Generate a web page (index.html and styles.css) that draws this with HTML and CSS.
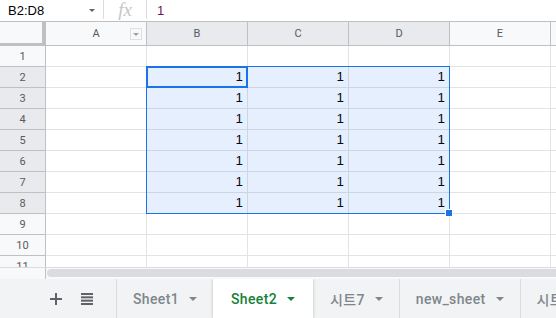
FILE: index.html
```html
<!DOCTYPE html>
<html>
<head>
<meta charset="utf-8">
<link rel="stylesheet" href="styles.css">
</head>
<body>
<div class="formula-bar">
  <div class="name-box"><span>B2:D8</span><span class="tri small"></span></div>
  <div class="vsep"></div>
  <div class="fx">fx</div>
  <div class="vsep"></div>
  <div class="formula">1</div>
</div>
<div class="grid-wrap">
  <div class="grid">
    <div class="corner"></div>
    <div class="ch">A<span class="filter"><span class="tri tiny"></span></span></div>
    <div class="ch sel">B</div>
    <div class="ch sel">C</div>
    <div class="ch sel">D</div>
    <div class="ch">E</div>
    <div class="ch"></div>

    <div class="rh">1</div><div class="c"></div><div class="c"></div><div class="c"></div><div class="c"></div><div class="c"></div><div class="c"></div>
    <div class="rh sel">2</div><div class="c"></div><div class="c n">1</div><div class="c n">1</div><div class="c n">1</div><div class="c"></div><div class="c"></div>
    <div class="rh sel">3</div><div class="c"></div><div class="c n">1</div><div class="c n">1</div><div class="c n">1</div><div class="c"></div><div class="c"></div>
    <div class="rh sel">4</div><div class="c"></div><div class="c n">1</div><div class="c n">1</div><div class="c n">1</div><div class="c"></div><div class="c"></div>
    <div class="rh sel">5</div><div class="c"></div><div class="c n">1</div><div class="c n">1</div><div class="c n">1</div><div class="c"></div><div class="c"></div>
    <div class="rh sel">6</div><div class="c"></div><div class="c n">1</div><div class="c n">1</div><div class="c n">1</div><div class="c"></div><div class="c"></div>
    <div class="rh sel">7</div><div class="c"></div><div class="c n">1</div><div class="c n">1</div><div class="c n">1</div><div class="c"></div><div class="c"></div>
    <div class="rh sel">8</div><div class="c"></div><div class="c n">1</div><div class="c n">1</div><div class="c n">1</div><div class="c"></div><div class="c"></div>
    <div class="rh">9</div><div class="c"></div><div class="c"></div><div class="c"></div><div class="c"></div><div class="c"></div><div class="c"></div>
    <div class="rh">10</div><div class="c"></div><div class="c"></div><div class="c"></div><div class="c"></div><div class="c"></div><div class="c"></div>
    <div class="rh">11</div><div class="c"></div><div class="c"></div><div class="c"></div><div class="c"></div><div class="c"></div><div class="c"></div>
  </div>
  <div class="selection"></div>
  <div class="active-cell"></div>
  <div class="fill-handle"></div>
</div>
<div class="hscroll">
  <div class="hscroll-gutter"></div>
  <div class="hscroll-track"><div class="thumb"></div></div>
</div>
<div class="tabbar">
  <div class="tab-tools">
    <svg class="plus" width="14" height="14" viewBox="0 0 14 14"><path d="M7 1v12M1 7h12" stroke="#5f6368" stroke-width="2" fill="none"/></svg>
    <svg class="list" width="12" height="12" viewBox="0 0 12 12" fill="#5f6368"><rect x="0" y="0" width="12" height="2"/><rect x="0" y="3.33" width="12" height="2"/><rect x="0" y="6.67" width="12" height="2"/><rect x="0" y="10" width="12" height="2"/></svg>
  </div>
  <div class="tab"><span>Sheet1</span><span class="tri"></span></div>
  <div class="tab active"><span>Sheet2</span><span class="tri"></span></div>
  <div class="tab"><span>시트7</span><span class="tri"></span></div>
  <div class="tab"><span>new_sheet</span><span class="tri"></span></div>
  <div class="tab"><span>시트8</span><span class="tri"></span></div>
</div>
</body>
</html>
```
FILE: styles.css
```css
* { box-sizing: border-box; }
html, body { margin: 0; padding: 0; }
body {
  width: 556px;
  height: 318px;
  overflow: hidden;
  background: #fff;
  font-family: Roboto, "Noto Sans CJK KR", Arial, sans-serif;
  color: #000;
}

.tri {
  display: inline-block;
  width: 0; height: 0;
  border-left: 4px solid transparent;
  border-right: 4px solid transparent;
  border-top: 4px solid #80868b;
}
.tri.small {
  border-left-width: 3px;
  border-right-width: 3px;
  border-top: 3px solid #5f6368;
}
.tri.tiny {
  border-left-width: 3px;
  border-right-width: 3px;
  border-top: 3px solid #9aa0a6;
}

/* formula bar */
.formula-bar {
  display: flex;
  align-items: center;
  height: 22px;
  border-bottom: 1px solid #c0c0c0;
}
.name-box {
  width: 103px;
  padding: 0 8px;
  display: flex;
  align-items: center;
  justify-content: space-between;
  font-family: Arial, "Liberation Sans", sans-serif;
  font-size: 13px;
}
.vsep {
  width: 1px;
  height: 19px;
  background: #dadce0;
  align-self: flex-start;
}
.fx {
  width: 42px;
  height: 21px;
  display: flex;
  align-items: center;
  justify-content: center;
  font-family: "Liberation Serif", serif;
  font-style: italic;
  font-size: 19px;
  color: #c4c7c9;
  line-height: 1;
  padding-bottom: 3px;
}
.formula {
  padding-left: 10px;
  font-family: Arial, "Liberation Sans", sans-serif;
  font-size: 13px;
  color: #6d1a52;
}

/* grid */
.grid-wrap {
  position: relative;
  height: 245px;
  overflow: hidden;
}
.grid {
  display: grid;
  grid-template-columns: 46px repeat(6, 101px);
  grid-template-rows: 24px;
  grid-auto-rows: 21px;
}
.grid > div {
  border-right: 1px solid #e2e3e3;
  border-bottom: 1px solid #e2e3e3;
}
.grid > .corner {
  background: #f8f9fa;
  border-right: 4px solid #c0c0c0;
  border-bottom: 3px solid #c0c0c0;
}
.grid > .ch {
  position: relative;
  background: #f8f9fa;
  border-right: 1px solid #c0c0c0;
  border-bottom: 1px solid #c0c0c0;
  display: flex;
  align-items: center;
  justify-content: center;
  font-family: Roboto, Arial, sans-serif;
  font-size: 11px;
  color: #575a5e;
}
.grid > .rh {
  background: #f8f9fa;
  border-right: 1px solid #c0c0c0;
  border-bottom: 1px solid #c0c0c0;
  display: flex;
  align-items: center;
  justify-content: center;
  font-family: Roboto, Arial, sans-serif;
  font-size: 11px;
  color: #575a5e;
}
.grid > .sel { background: #e8eaed; }
.filter {
  position: absolute;
  right: 4px;
  top: 6px;
  width: 12px;
  height: 12px;
  border: 1px solid #e0e0e0;
  display: flex;
  align-items: center;
  justify-content: center;
  background: #f8f9fa;
}
.grid > .n {
  text-align: right;
  padding-right: 4px;
  font-family: Arial, "Liberation Sans", sans-serif;
  font-size: 13.33px;
  line-height: 20px;
  color: #000;
}

.selection {
  position: absolute;
  left: 146px;
  top: 44px;
  width: 304px;
  height: 148px;
  border: 1px solid #1a73e8;
  background: rgba(14, 101, 235, 0.1);
}
.active-cell {
  position: absolute;
  left: 146px;
  top: 44px;
  width: 102px;
  height: 22px;
  border: 2px solid #1a73e8;
}
.fill-handle {
  position: absolute;
  left: 445px;
  top: 187px;
  width: 8px;
  height: 8px;
  background: #1a73e8;
  border: 1px solid #fff;
}

/* horizontal scrollbar */
.hscroll {
  display: flex;
  height: 12px;
  border-top: 1px solid #dadce0;
}
.hscroll-gutter {
  width: 46px;
  background: #f8f9fa;
  border-right: 1px solid #c0c0c0;
}
.hscroll-track {
  flex: 1;
  padding: 1px 0 2px 1px;
  background: #f8f9fa;
}
.thumb {
  height: 8px;
  background: #dadce0;
  border-radius: 4px 0 0 4px;
}

/* tab bar */
.tabbar {
  display: flex;
  height: 39px;
  background: #f1f3f4;
  white-space: nowrap;
  overflow: hidden;
}
.tab-tools {
  width: 116px;
  flex-shrink: 0;
  display: flex;
  align-items: center;
  padding-left: 49px;
  gap: 18px;
}
.tab {
  display: flex;
  align-items: center;
  gap: 10px;
  padding: 0 16px;
  border-left: 1px solid #dadce0;
  font-family: Roboto, "Noto Sans CJK KR", sans-serif;
  font-size: 14px;
  font-weight: 500;
  letter-spacing: 0.35px;
  color: #80868b;
  flex-shrink: 0;
}
.tab.active {
  background: #fff;
  color: #188038;
  border-left-color: transparent;
  padding: 0 18px 0 17px;
  box-shadow: 0 0 3px rgba(60, 64, 67, 0.3);
  position: relative;
}
.tab.active + .tab { border-left-color: transparent; }
.tab.active .tri { border-top-color: #188038; }
```
